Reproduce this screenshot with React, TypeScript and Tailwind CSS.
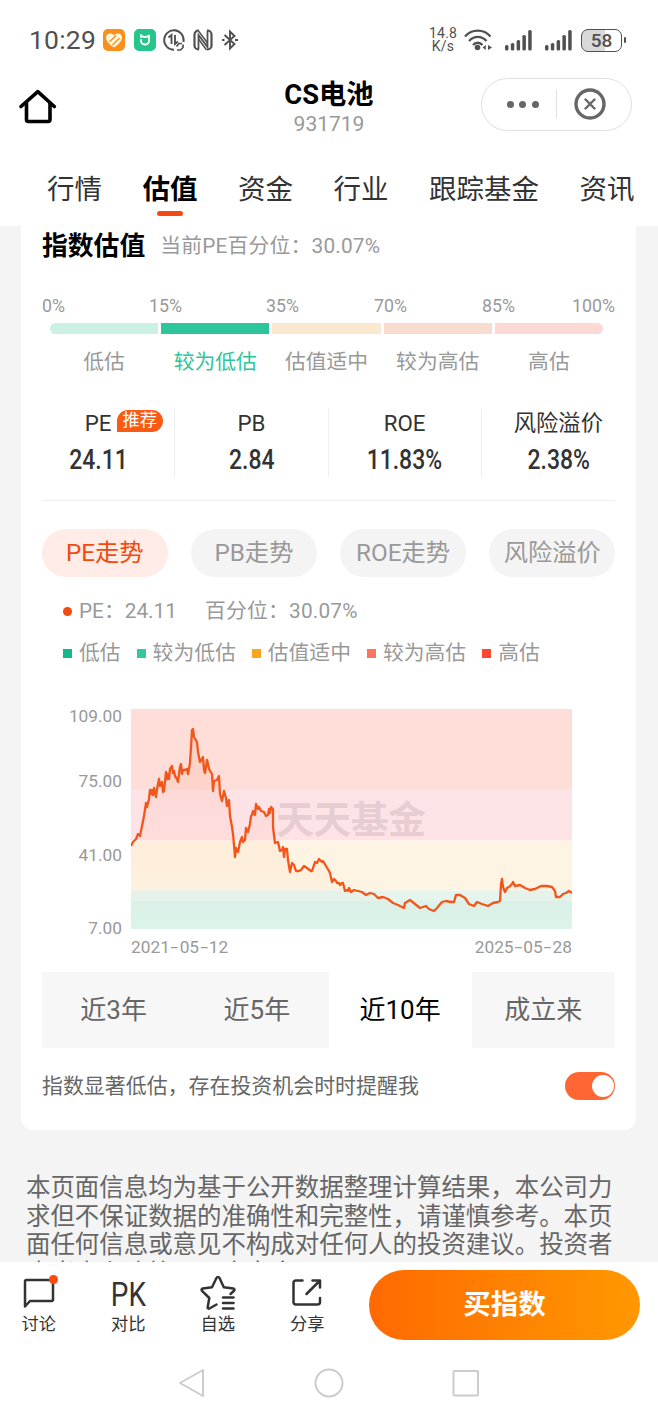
import type { ReactNode } from "react";

const tabs = ["行情", "估值", "资金", "行业", "跟踪基金", "资讯"];

const ranges = [
  { label: "低估", color: "bg-[#cdf0e5]" },
  { label: "较为低估", color: "bg-[#2dc59c]" },
  { label: "估值适中", color: "bg-[#fbe8d0]" },
  { label: "较为高估", color: "bg-[#f9dcd0]" },
  { label: "高估", color: "bg-[#fdd9d6]" },
];

const stats = [
  { label: "PE", value: "24.11", hot: true },
  { label: "PB", value: "2.84" },
  { label: "ROE", value: "11.83%" },
  { label: "风险溢价", value: "2.38%" },
];

const legend = [
  { label: "低估", color: "bg-[#14b88a]" },
  { label: "较为低估", color: "bg-[#36c6a0]" },
  { label: "估值适中", color: "bg-[#faa61a]" },
  { label: "较为高估", color: "bg-[#fb7460]" },
  { label: "高估", color: "bg-[#f94a30]" },
];

const trends = ["PE走势", "PB走势", "ROE走势", "风险溢价"];
const periods = ["近3年", "近5年", "近10年", "成立来"];

// chart coordinates, 441 x 220
const line =
  "0,137 2,133 5,130 7,125 9,127 10,122 13,107 15,94 16,98 18,90 19,81 20,85 21,81 22,86 23,79 25,88 26,80 28,70 29,77 31,73 32,83 33,82 35,63 36,70 37,65 38,70 39,60 41,57 42,64 43,62 44,67 46,70 47,73 49,58 50,55 51,65 52,61 54,61 56,60 57,65 59,54 60,38 61,21 62,20 63,28 66,33 67,43 69,53 72,48 73,61 74,64 76,51 77,55 78,60 81,65 82,82 83,72 86,71 88,67 89,85 91,92 93,82 95,89 96,97 98,91 99,107 101,118 102,125 103,136 104,148 105,139 107,143 109,133 111,128 112,133 114,131 115,119 117,123 119,115 120,107 121,106 122,102 124,106 125,95 127,100 128,98 130,102 133,103 135,107 137,106 138,100 139,104 140,98 142,100 142,118 144,134 147,133 149,142 151,141 152,138 153,148 154,140 156,140 157,151 159,163 161,154 163,156 165,162 168,162 170,161 173,157 176,159 180,162 181,162 184,153 186,154 188,150 191,153 192,152 195,157 198,162 199,164 201,173 203,170 205,172 206,174 208,174 209,176 211,174 212,174 214,182 216,181 217,182 218,179 220,183 223,181 227,182 231,183 235,186 239,184 243,185 247,189 252,188 257,190 262,194 267,196 273,199 274,194 279,191 284,195 289,199 295,197 298,200 303,202 306,199 311,193 315,192 320,193 323,193 325,186 329,186 334,189 338,195 343,197 346,193 351,195 357,197 362,194 367,193 369,192 370,175 371,170 372,178 374,183 376,179 378,178 381,175 382,173 384,177 389,176 394,179 399,181 404,180 410,177 416,177 421,178 424,182 425,188 429,188 432,185 435,184 438,182 441,184";

function StatusBar() {
  return (
    <div className="flex h-[66px] items-center pt-[14px] pl-[29px] pr-8 text-[#505050]">
      <span className="w-[66px] text-[26.5px] leading-none tracking-[0.2px]">10:29</span>
      <svg className="ml-2 size-[22px]" viewBox="0 0 22 22">
        <rect width="22" height="22" rx="5" fill="#f98f1d" />
        <path d="M11 18.500C4.500 14 3 11 3 8.500 3 4.500 8 3 11 6.200 14 3 19 4.500 19 8.500c0 2.500-1.500 5.500-8 10z" fill="#fff6d8" />
        <path d="M6.500 12.800L13 6.500M9.500 16L16.500 9.200" stroke="#f98f1d" strokeWidth="1.400" />
      </svg>
      <svg className="ml-[9px] size-[22px]" viewBox="0 0 22 22">
        <rect width="22" height="22" rx="5" fill="#25c58c" />
        <path d="M7 6v2M7 6.500c1.500 2 6.500 2 8 0V12a3.500 3.500 0 0 1-3.500 3.500h-1A3.500 3.500 0 0 1 7 12v-1" fill="none" stroke="#fff" strokeWidth="1.800" strokeLinecap="round" strokeLinejoin="round" />
      </svg>
      <svg className="ml-[7px] size-[22px]" viewBox="0 0 22 22" fill="none" stroke="#505050" strokeWidth="1.900">
        <path d="M20.500 12A9.700 9.700 0 1 0 11 20.700M20.600 9v4" />
        <path d="M5.500 8.500L8.500 6v9M12 6v9l3-2.500" />
        <path d="M13.500 17.500l2.500-3h3M20 15.500v3l-2.500 2.500H14" strokeWidth="1.700" />
      </svg>
      <svg className="ml-2 h-[22px] w-5" viewBox="0 0 20 22" fill="none" stroke="#505050">
        <path d="M6 1.500H5.500a4 4 0 0 0-4 4v11a4 4 0 0 0 4 4H6M14 1.500h.5a4 4 0 0 1 4 4v11a4 4 0 0 1-4 4H14" strokeWidth="2.200" />
        <path d="M5.500 20V6l9 12V2" strokeWidth="1.800" />
        <path d="M5.500 2l9 12M5.500 10l8 11" strokeWidth="1.500" />
      </svg>
      <svg className="ml-[9px] h-[22px] w-4" viewBox="0 0 16 22" fill="none" stroke="#505050" strokeWidth="1.900">
        <path d="M2.500 6l10 9L8 19.500V2.500L12.500 7l-10 9" />
        <path d="M0 11h2.500M13 11h3" strokeWidth="2.200" />
      </svg>
      <div className="ml-auto flex w-7 flex-col text-center text-[14px] leading-[13px] tracking-[0.2px]">
        <span>14.8</span>
        <span>K/s</span>
      </div>
      <svg className="ml-[7px] h-[22px] w-7" viewBox="0 0 28 22" fill="none" stroke="#505050" strokeWidth="2.300">
        <path d="M1 7.500C8-.3 19.500-.3 26.500 7.500M5 12c5-5.500 12.500-5.500 17.500 0M9 16c2.800-3 6.700-3 9.500 0" />
        <circle cx="13.500" cy="18.500" r="2.800" fill="#505050" stroke="none" />
        <path d="M18.500 18.500l3.300-2.500v5zM28 18.500l-4-2.500v5z" fill="#505050" stroke="none" />
      </svg>
      <Signal className="ml-[13px]" />
      <Signal className="ml-[13px]" />
      <div className="ml-[9px] flex items-center gap-[2px]">
        <div className="flex h-[23px] w-[41px] items-center justify-center rounded-[7px] border-[1.500px] border-[#505050] bg-linear-to-r from-[#d9d9d9] from-58% to-white to-58% text-[19px] leading-none font-medium">
          58
        </div>
        <div className="h-[6px] w-[2px] rounded-full bg-[#505050]" />
      </div>
    </div>
  );
}

function Signal({ className }: { className: string }) {
  return (
    <svg className={`h-[22px] w-[27px] ${className}`} viewBox="0 0 27 22" fill="#505050">
      <rect x="0" y="16" width="3.500" height="5.500" rx="1.500" />
      <rect x="5.800" y="14" width="3.500" height="7.500" rx="1.500" />
      <rect x="11.600" y="11" width="3.500" height="10.500" rx="1.500" />
      <rect x="17.400" y="6" width="3.500" height="15.500" rx="1.500" />
      <rect x="23.200" y="1" width="3.500" height="20.500" rx="1.500" />
    </svg>
  );
}

function Header() {
  return (
    <div className="grid h-[76px] grid-cols-[1fr_auto_1fr] items-center pl-[19px] pr-[26px]">
      <svg className="mt-1 h-9 w-[38px]" viewBox="0 0 38 36" fill="none" stroke="#000" strokeWidth="3.600" strokeLinecap="round" strokeLinejoin="round">
        <path d="M2 18.500L18.800 3.700l16.500 14.800" />
        <path d="M7.500 15v16.500a2 2 0 0 0 2 2h19.500a2 2 0 0 0 2-2V15" />
      </svg>
      <div className="flex flex-col items-center pt-[9px] pl-[7px] whitespace-nowrap">
        <h1 className="text-[27.300px] leading-[30px] font-bold text-black">CS电池</h1>
        <span className="text-[21px] leading-[28px] text-[#999]">931719</span>
      </div>
      <div className="flex h-[53px] w-[151px] items-center justify-self-end rounded-full border border-[#dfdfdf]">
        <div className="flex flex-1 justify-center gap-[5.500px] pl-[7px]">
          <i className="size-[7px] rounded-full bg-[#666]" />
          <i className="size-[7px] rounded-full bg-[#666]" />
          <i className="size-[7px] rounded-full bg-[#666]" />
        </div>
        <div className="h-7 w-px bg-[#dfdfdf]" />
        <div className="flex w-[74px] justify-center pr-[9px]">
          <svg className="size-8" viewBox="0 0 32 32" fill="none" stroke="#666" strokeLinecap="round">
            <circle cx="16" cy="16" r="14" strokeWidth="3.400" />
            <path d="M11.500 11.500l9 9M20.500 11.500l-9 9" strokeWidth="2.400" />
          </svg>
        </div>
      </div>
    </div>
  );
}

function ValuationScale() {
  return (
    <div>
      <div className="mt-[31px] flex h-5 text-[17.800px] leading-5 text-[#999]">
        <span className="w-[107px]">0%</span>
        <span className="w-[117px]">15%</span>
        <span className="w-[108px]">35%</span>
        <span className="w-[108px]">70%</span>
        <span>85%</span>
        <span className="ml-auto">100%</span>
      </div>
      <div className="mt-[7px] ml-2 grid w-[553px] grid-cols-5 gap-x-[3px]">
        {ranges.map((r, i) => (
          <div key={r.label} className="flex flex-col items-center">
            <div className={`h-[11px] w-full ${r.color} ${i === 0 ? "rounded-l-full" : ""} ${i === 4 ? "rounded-r-full" : ""}`} />
            <span className={`mt-[13px] text-[20.800px] leading-[30px] whitespace-nowrap ${i === 1 ? "text-[#2dc59c]" : "text-[#999]"}`}>
              {r.label}
            </span>
          </div>
        ))}
      </div>
    </div>
  );
}

function Stats() {
  return (
    <div className="-mx-5 mt-[32px] grid h-16 grid-cols-4 divide-x divide-[#eee]">
      {stats.map((s) => (
        <div key={s.label} className="flex flex-col items-center text-[#333]">
          <div className="relative text-[22.300px] leading-[28px]">
            {s.label}
            {s.hot && (
              <span className="absolute top-px left-8 h-[22px] w-[46px] rounded-full rounded-bl-none bg-[#fa5a14] text-center text-[17.300px] leading-[21px] whitespace-nowrap text-white">
                推荐
              </span>
            )}
          </div>
          <span className="mt-[6px] scale-x-85 text-[27px] leading-[34px] font-medium">{s.value}</span>
        </div>
      ))}
    </div>
  );
}

function DateLabel({ parts }: { parts: string[] }) {
  return (
    <span className="flex">
      {parts[0]}
      <span className="mx-[2.500px] scale-x-160">-</span>
      {parts[1]}
      <span className="mx-[2.500px] scale-x-160">-</span>
      {parts[2]}
    </span>
  );
}

function Chart() {
  return (
    <div className="mt-[41px] flex text-[17.300px] text-[#999]">
      <div className="flex w-[80px] flex-col text-right leading-5">
        <span className="-mt-[3px] h-[65px]">109.00</span>
        <span className="h-[74px]">75.00</span>
        <span className="h-[73px]">41.00</span>
        <span>7.00</span>
      </div>
      <div className="ml-[9px] w-[441px]">
        <svg className="block h-[220px] w-[441px]" viewBox="0 0 441 220">
          <defs>
            <linearGradient id="fade" x1="0" y1="0" x2="0" y2="1">
              <stop offset="0" stopColor="#f05a14" stopOpacity="0.1" />
              <stop offset="1" stopColor="#f05a14" stopOpacity="0" />
            </linearGradient>
          </defs>
          <rect width="441" height="81.500" fill="#ffddd8" />
          <rect y="81.500" width="441" height="50" fill="#fee3e6" />
          <rect y="131.500" width="441" height="50" fill="#fef4e3" />
          <rect y="181.500" width="441" height="10.500" fill="#e5f5ee" />
          <rect y="192" width="441" height="28" fill="#dbf3ea" />
          <text x="145" y="124" fontSize="38" fontWeight="700" fill="#6b5560" fillOpacity="0.18" textLength="150">
            天天基金
          </text>
          <polygon points={`0,220 ${line} 441,220`} fill="url(#fade)" />
          <polyline points={line} fill="none" stroke="#f2561a" strokeWidth="2.300" strokeLinejoin="round" />
        </svg>
        <div className="mt-2 flex justify-between leading-5">
          <DateLabel parts={["2021", "05", "12"]} />
          <DateLabel parts={["2025", "05", "28"]} />
        </div>
      </div>
    </div>
  );
}

function Action({ label, children }: { label: string; children: ReactNode }) {
  return (
    <div className="flex w-[89.500px] flex-col items-center text-[#333]">
      <div className="flex h-[38px] items-center justify-center">{children}</div>
      <span className="mt-px text-[17.300px] leading-6">{label}</span>
    </div>
  );
}

function BottomBar() {
  return (
    <div className="flex h-[84px] bg-white pt-2">
      <div className="-ml-[6px] flex w-[358px] pt-[3px]">
        <Action label="讨论">
          <div className="relative">
            <svg className="h-[34px] w-8" viewBox="0 0 32 34" fill="none" stroke="#333" strokeWidth="2.500" strokeLinejoin="round">
              <path d="M2 31.500V6.500A1.500 1.500 0 0 1 3.500 5h25A1.500 1.500 0 0 1 30 6.500v18a1.500 1.500 0 0 1-1.500 1.500H7z" />
            </svg>
            <i className="absolute top-0 -right-[3px] size-[9px] rounded-full bg-[#fa4a0c]" />
          </div>
        </Action>
        <Action label="对比">
          <span className="mt-[3px] scale-x-82 text-[34px] leading-[28px]">PK</span>
        </Action>
        <Action label="自选">
          <svg className="size-[38px]" viewBox="0 0 38 38" fill="none" stroke="#333" strokeWidth="2.500" strokeLinecap="round" strokeLinejoin="round">
            <path d="M17.500 31.500l-7 4c-1 .5-2-.2-1.800-1.300l1.600-9.200-7.300-7.200c-.9-.9-.4-2 .8-2.200l9.200-1.400 4.600-9.400c.6-1.200 2.200-1.200 2.800 0l4.400 9.400 9.400 1.400c1.200.2 1.700 1.400.8 2.200L31.500 21" />
            <path d="M24 24.500h10.500M24 30h10.500M24 35.500h10.500" />
          </svg>
        </Action>
        <Action label="分享">
          <svg className="h-[30px] w-8" viewBox="0 0 32 30" fill="none" stroke="#333" strokeWidth="2.500" strokeLinecap="round" strokeLinejoin="round">
            <path d="M11.500 3.500H5A2.500 2.500 0 0 0 2.500 6v19A2.500 2.500 0 0 0 5 27.500h21.500A2.500 2.500 0 0 0 29 25v-4" />
            <path d="M15.500 17L29 3.500M21.500 3.500H29v7" />
          </svg>
        </Action>
      </div>
      <button className="ml-[17px] h-[70px] w-[271px] rounded-full bg-linear-to-r from-[#ff6900] to-[#ff9800] text-[27.500px] font-bold text-white">
        买指数
      </button>
    </div>
  );
}

export default function App() {
  return (
    <div className="flex h-[1416px] w-[658px] flex-col overflow-hidden bg-[#f4f4f4] font-[Roboto,'Noto_Sans_CJK_SC',sans-serif]">
      <div className="h-[226px] shrink-0 bg-white">
        <StatusBar />
        <Header />
        <div className="flex gap-[40.500px] pt-[28px] pl-[47px] text-[27.500px] leading-[40px] text-[#333]">
          {tabs.map((t) => (
            <div key={t} className={`flex shrink-0 flex-col items-center ${t === "估值" ? "font-bold text-black" : ""}`}>
              {t}
              {t === "估值" && <i className="mt-px h-[5px] w-[26px] rounded-full bg-[#f24a10]" />}
            </div>
          ))}
        </div>
      </div>

      <div className="h-[1036px] shrink-0 overflow-hidden">
        <div className="mr-[22px] ml-[21px] h-[904px] rounded-b-xl bg-white px-[21px] whitespace-nowrap">
          <div className="flex h-[39px] items-center pt-[2px]">
            <h2 className="text-[25.800px] leading-none font-bold text-black">指数估值</h2>
            <span className="ml-[15px] text-[20.800px] tracking-[0.200px] text-[#999]">当前PE百分位：30.07%</span>
          </div>
          <ValuationScale />
          <Stats />

          {/* trend switch */}
          <div className="mt-[27px] flex justify-between border-t border-[#eee] pt-7">
            {trends.map((t, i) => (
              <div
                key={t}
                className={`flex h-12 w-[125.500px] items-center justify-center rounded-full pt-px text-[24.300px] ${i === 0 ? "bg-[#ffece6] text-[#f24a10]" : "bg-[#f4f4f4] text-[#999]"}`}
              >
                {t}
              </div>
            ))}
          </div>

          <div className="mt-[19px] ml-[21px] flex h-[30px] items-center text-[20.800px] leading-[30px] text-[#999]">
            <i className="mr-[7px] size-[9px] rounded-full bg-[#f24a10]" />
            <span className="w-[126px]">PE：24.11</span>
            <span className="tracking-[0.200px]">百分位：30.07%</span>
          </div>
          <div className="mt-3 ml-[21px] flex h-[30px] items-center gap-4 text-[20.800px] leading-[30px] text-[#999]">
            {legend.map((l) => (
              <div key={l.label} className="flex items-center gap-[7px]">
                <i className={`size-[9px] ${l.color}`} />
                {l.label}
              </div>
            ))}
          </div>

          <Chart />

          <div className="mt-[15px] grid h-[76px] grid-cols-4 text-center text-[26px] leading-[76px]">
            {periods.map((p) => (
              <span key={p} className={p === "近10年" ? "text-black" : "bg-[#f7f7f7] text-[#666]"}>
                {p}
              </span>
            ))}
          </div>

          <div className="mt-[24px] flex h-7 items-center justify-between">
            <span className="pt-[2px] text-[20.950px] text-[#666]">指数显著低估，存在投资机会时时提醒我</span>
            <div className="flex h-7 w-[50px] items-center justify-end rounded-full bg-[#ff6633] pr-px">
              <i className="size-[22px] rounded-full bg-white" />
            </div>
          </div>
        </div>

        <p className="mt-[44px] ml-[26px] w-[590px] text-[24.450px] leading-[28.500px] text-[#666]">
          本页面信息均为基于公开数据整理计算结果，本公司力
          <br />
          求但不保证数据的准确性和完整性，请谨慎参考。本页
          <br />
          面任何信息或意见不构成对任何人的投资建议。投资者
          <br />
          应当自主决策，不应完全
        </p>
      </div>

      <BottomBar />

      {/* system navigation */}
      <div className="flex flex-1 justify-center bg-white pt-[22px]">
        <svg className="h-8 w-[300px]" viewBox="0 0 300 32" fill="none" stroke="#ccc" strokeWidth="2" strokeLinejoin="round">
          <path d="M1 15L24 2v26z" />
          <circle cx="150" cy="15" r="13.500" />
          <rect x="274.500" y="3" width="24.500" height="24.500" rx="1" />
        </svg>
      </div>
    </div>
  );
}
